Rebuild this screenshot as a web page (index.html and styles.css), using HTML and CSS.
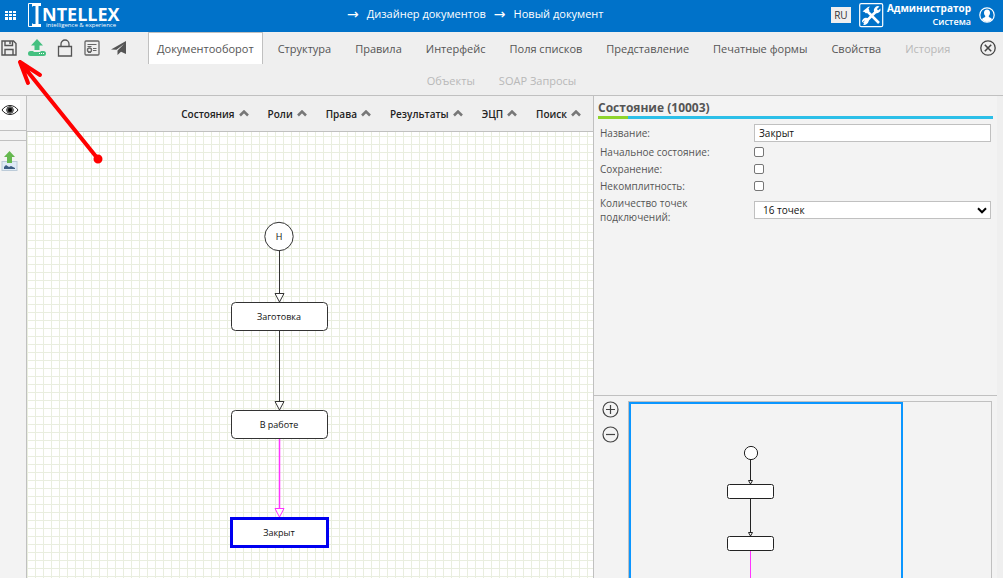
FILE: index.html
```html
<!DOCTYPE html>
<html lang="ru">
<head>
<meta charset="utf-8">
<title>Дизайнер документов</title>
<link rel="stylesheet" href="styles.css">
</head>
<body>
<div class="app">
  <header class="header">
    <div class="brand">
      <button class="icon-btn" aria-label="Меню">
        <svg width="11" height="10" viewBox="0 0 11 10" fill="#fff"><path d="M0 0h3v2H0zM4 0h3v2H4zM8 0h3v2H8zM0 3h3v2H0zM4 3h3v2H4zM8 3h3v2H8zM0 6h3v3H0zM4 6h3v3H4zM8 6h3v3H8z"/></svg>
      </button>
      <div class="logo">
        <svg width="14" height="25" viewBox="0 0 14 25" fill="none" stroke="#fff"><path d="M6 .5H.5v23H6M4.500 .5v3M4.500 23.500v-3"/><path d="M4 1.500h9M4 22.500h9M9 1v22" stroke-width="3"/></svg>
        <div class="logo-words"><strong>NTELLEX</strong><small>intelligence &amp; experience</small></div>
      </div>
    </div>
    <nav class="crumbs" aria-label="Путь">
      <span>→</span><a href="#">Дизайнер документов</a><span>→</span><a href="#">Новый документ</a>
    </nav>
    <div class="account">
      <button class="lang">RU</button>
      <svg width="25" height="25" viewBox="0 0 25 25" fill="none" stroke="#fff"><rect x=".7" y=".7" width="23" height="23" rx="1.500" stroke-width="1.200"/><path d="M7 7l13 13M18.500 7L5 20.500" stroke-width="2.600"/><path d="M3.500 8.500L9 4l2-.5-1.500 2L10.500 8 7 10.500 5.500 9z" fill="#fff" stroke="none"/><path d="M20.500 3.500l-2.600 2.600 1 1.300 2.600-2a4 4 0 0 1-5.500 4.500 4 4 0 0 1 4.500-6.400zM4 21.500l2.600-2.600-1-1.300-2.600 2a4 4 0 0 1 5.500-4.500A4 4 0 0 1 4 21.500z" fill="#fff" stroke="none"/></svg>
      <div class="user"><strong>Администратор</strong><span>Система</span></div>
      <svg width="16" height="16" viewBox="0 0 16 16"><circle cx="8" cy="8" r="7.200" fill="none" stroke="#fff" stroke-width="1.200"/><path d="M8 2.500c2 0 3 1.300 3 3.200 0 1.500-.6 2.500-1.200 3.100v1.300c1.600.6 2.800 1 3.200 2.300A7 7 0 0 1 8 15a7 7 0 0 1-5-2.600c.4-1.300 1.600-1.700 3.200-2.300V8.800C5.600 8.200 5 7.200 5 5.700c0-1.900 1-3.200 3-3.200z" fill="#fff"/></svg>
    </div>
  </header>

  <div class="toolbar">
    <div class="toolbar-row">
      <div class="tools">
        <button class="icon-btn" aria-label="Сохранить"><svg width="16" height="16" viewBox="0 0 16 16" fill="none" stroke="#555" stroke-width="1.400"><path d="M1 1h11.500L15 3.500V15H1zM4 1v4.500h7.500V1M9 1.500v2.500M4 15V9.500h8V15"/></svg></button>
        <button class="icon-btn" aria-label="Опубликовать"><svg width="18" height="18" viewBox="0 0 18 18"><path d="M9 0l6 6.500h-3.500V11h-5V6.500H3z" fill="#45c080"/><path d="M2.500 12h3v1h7v-1h3a2.500 2.500 0 0 1 0 5h-13a2.500 2.500 0 0 1 0-5z" fill="#45c080"/><path d="M11 14.500h1M13 14.500h1M15 14.500h1" stroke="#fff"/></svg></button>
        <button class="icon-btn" aria-label="Заблокировать"><svg width="16" height="18" viewBox="0 0 16 18" fill="none" stroke="#555" stroke-width="1.300"><path d="M1.500 7.500h13v9.500h-13zM4 7.500V5a4 4 0 0 1 8 0v2.500"/></svg></button>
        <button class="icon-btn" aria-label="Сертификат"><svg width="16" height="16" viewBox="0 0 16 16" fill="none" stroke="#666"><rect x="1" y="1" width="14" height="14" rx="1" stroke-width="1.300"/><path d="M3.500 4.500h9M3.500 6.500h4M9 8.500h3.500M9 10.500h3.500"/><circle cx="5.500" cy="10" r="2" stroke-width="1.400"/><path d="M4 12.500h3"/></svg></button>
        <button class="icon-btn" aria-label="Отправить"><svg width="16" height="16" viewBox="0 0 16 16" fill="#555"><path d="M15 1v13l-5-2.200L6.500 15v-4.500L13 4 5.500 9.800 0 9.500z"/></svg></button>
      </div>
      <nav class="tabs">
        <a class="tab active" href="#">Документооборот</a><a class="tab" href="#">Структура</a><a class="tab" href="#">Правила</a><a class="tab" href="#">Интерфейс</a><a class="tab" href="#">Поля списков</a><a class="tab" href="#">Представление</a><a class="tab" href="#">Печатные формы</a><a class="tab" href="#">Свойства</a><a class="tab off" href="#">История</a>
      </nav>
      <button class="icon-btn close" aria-label="Закрыть"><svg width="16" height="16" viewBox="0 0 16 16" fill="none" stroke="#444" stroke-width="1.300"><circle cx="8" cy="8" r="7.200"/><path d="M4.800 4.800l6.400 6.400M11.200 4.800l-6.400 6.400" stroke-width="1.600"/></svg></button>
    </div>
    <nav class="tabs second"><a class="tab off" href="#">Объекты</a><a class="tab off" href="#">SOAP Запросы</a></nav>
  </div>

  <main class="body">
    <aside class="rail">
      <button class="icon-btn eye" aria-label="Просмотр"><svg width="18" height="12" viewBox="0 0 18 12" fill="none" stroke="#222"><path d="M1 6c4-6 12-6 16 0-4 6-12 6-16 0z"/><circle cx="9" cy="6" r="3.300"/><circle cx="9" cy="6" r="2.200" fill="#000"/></svg></button>
      <div class="rail-gap"></div>
      <button class="icon-btn export" aria-label="Экспорт изображения"><svg width="17" height="20" viewBox="0 0 17 20"><rect x="1" y="10.500" width="15" height="9" fill="#dfeaf6" stroke="#bccbd8"/><path d="M3 18v-2l2-2 3 2 2-1 4 2v1z" fill="#3d5d82"/><path d="M8.500 0L14 6h-3v6H6V6H3z" fill="#65b84f"/></svg></button>
    </aside>

    <section class="designer">
      <div class="menu">
        <button>Состояния<svg class="chev" viewBox="0 0 10 7"><path d="M1 5.500l4-4 4 4"/></svg></button>
        <button>Роли<svg class="chev" viewBox="0 0 10 7"><path d="M1 5.500l4-4 4 4"/></svg></button>
        <button>Права<svg class="chev" viewBox="0 0 10 7"><path d="M1 5.500l4-4 4 4"/></svg></button>
        <button>Результаты<svg class="chev" viewBox="0 0 10 7"><path d="M1 5.500l4-4 4 4"/></svg></button>
        <button>ЭЦП<svg class="chev" viewBox="0 0 10 7"><path d="M1 5.500l4-4 4 4"/></svg></button>
        <button>Поиск<svg class="chev" viewBox="0 0 10 7"><path d="M1 5.500l4-4 4 4"/></svg></button>
      </div>
      <div class="canvas">
        <svg class="diagram" width="566" height="446" viewBox="0 0 566 446">
          <g fill="#fff" stroke="#333">
            <path d="M252.500 118v44M252.500 199v71"/>
            <path d="M252.500 307v69" stroke="#ff33ff" stroke-width="1.500"/>
            <path d="M248 161.500h9l-4.500 8.500zM248 269.500h9l-4.500 8.500z"/>
            <path d="M248 376.500h9l-4.500 8.500z" stroke="#ff33ff"/>
            <circle cx="252" cy="104.500" r="14.200"/>
            <rect x="204.500" y="170.500" width="96" height="28" rx="4"/>
            <rect x="204.500" y="278.500" width="96" height="28" rx="4"/>
            <rect x="204.500" y="386.500" width="96" height="28" stroke="#0000f0" stroke-width="3"/>
          </g>
          <g class="node-text"><text x="252" y="108">Н</text><text x="252" y="188">Заготовка</text><text x="252" y="296">В работе</text><text x="252" y="404">Закрыт</text></g>
        </svg>
      </div>
    </section>

    <aside class="side">
      <form class="props">
        <h2>Состояние (10003)</h2>
        <div class="rule"></div>
        <div class="fields">
          <label for="name">Название:</label><input id="name" class="box" type="text" value="Закрыт">
          <label for="start">Начальное состояние:</label><input id="start" type="checkbox">
          <label for="keep">Сохранение:</label><input id="keep" type="checkbox">
          <label for="part">Некомплитность:</label><input id="part" type="checkbox">
          <label for="points">Количество точек подключений:</label>
          <div class="select"><select id="points" class="box"><option>16 точек</option></select><svg width="10" height="7" viewBox="0 0 10 7"><path d="M1 1.300l4 4 4-4" fill="none" stroke="#000" stroke-width="2"/></svg></div>
        </div>
      </form>
      <div class="overview">
        <div class="zoom">
          <button class="icon-btn" aria-label="Увеличить"><svg width="17" height="17" viewBox="0 0 17 17" fill="none" stroke="#444" stroke-width="1.200"><circle cx="8.500" cy="8.500" r="7.500"/><path d="M4 8.500h9M8.500 4v9"/></svg></button>
          <button class="icon-btn" aria-label="Уменьшить"><svg width="17" height="17" viewBox="0 0 17 17" fill="none" stroke="#444" stroke-width="1.200"><circle cx="8.500" cy="8.500" r="7.500"/><path d="M4 8.500h9"/></svg></button>
        </div>
        <div class="map"><div class="view">
          <svg class="mini" width="270" height="174" viewBox="0 0 270 174" fill="#fff" stroke="#222">
            <path d="M119.500 55v25M119.500 94v38"/><path d="M117.500 76.500h4l-2 3.500zM117.500 128.500h4l-2 3.500z"/>
            <circle cx="120" cy="49" r="6.600"/><rect x="96.500" y="80.500" width="46" height="14" rx="2"/><rect x="96.500" y="132.500" width="46" height="14" rx="2"/>
            <path d="M119.500 147v27" stroke="#ff33ff"/>
          </svg>
        </div></div>
      </div>
    </aside>
  </main>
  <svg class="pointer" width="90" height="108" viewBox="0 0 90 108" fill="none" stroke="#f00" stroke-width="4" stroke-linecap="round"><path d="M82 102L4 5M4 5l20 13M4 5l8 21"/><circle cx="82" cy="102" r="2.500" fill="#f00"/></svg>
</div>
</body>
</html>
```
FILE: styles.css
```css
* { box-sizing: border-box; }
body { margin: 0; font: 11px/16px "Open Sans", "Noto Sans", sans-serif; color: #555; background: #efefef; }
a { color: inherit; text-decoration: none; }
svg { display: block; flex: none; }
button { font: inherit; color: inherit; border: 0; padding: 0; background: none; }
.app { position: relative; display: flex; flex-direction: column; height: 100vh; overflow: hidden; }

.header { display: flex; justify-content: space-between; align-items: center; height: 32px; padding: 0 8px 0 5px; background: #0072c9; color: #fff; flex: none; }
.brand { display: flex; align-items: center; gap: 12px; }
.icon-btn { flex: none; }
.logo { display: flex; }
.logo-words { display: flex; flex-direction: column; padding-top: 3px; }
.logo-words strong { font: bold 18px/16px "Open Sans", sans-serif; }
.logo-words small { font-size: 6px; line-height: 7px; padding-left: 4px; }
.crumbs { display: flex; align-items: center; gap: 8px; font-weight: 500; padding-bottom: 4px; }
.crumbs span { font-family: "DejaVu Sans", sans-serif; font-size: 14px; }
.account { display: flex; align-items: center; gap: 8px; padding-bottom: 2px; }
.lang { width: 20px; height: 16px; background: #efefef; color: #333; font-size: 10px; line-height: 14px; }
.user { display: flex; flex-direction: column; text-align: right; font-size: 10px; line-height: 13px; margin-left: -5px; }
.user span { font-size: 9px; font-weight: 600; }

.toolbar { flex: none; height: 64px; border-bottom: 1px solid #c0c0c0; }
.toolbar-row { display: flex; align-items: center; height: 32px; padding: 0 7px 0 1px; }
.tools { display: flex; align-items: center; gap: 11px; margin-right: 21px; }
.close { margin-left: auto; }
.tabs { display: flex; gap: 6px; align-items: flex-start; white-space: nowrap; }
.tab { padding: 0 8px; line-height: 31px; border: 1px solid transparent; border-bottom: 0; }
.tab.active { background: #fff; border-color: #c0c0c0; }
.tab.off { color: #b8b8b8; }
.second { justify-content: center; }

.body { flex: 1; min-height: 0; display: grid; grid-template-columns: 27px minmax(0, 1fr) 410px; }
.rail { border-right: 1px solid #c0c0c0; background: #f3f3f3; }
.eye { display: flex; align-items: center; justify-content: center; width: 20px; height: 20px; margin: 4px 0 10px; background: #fff; }
.rail-gap { height: 11px; border: solid #c0c0c0; border-width: 1px 0; }
.export { display: block; margin: 10px 0 0 1px; }

.designer { display: flex; flex-direction: column; min-width: 0; }
.menu { display: flex; flex: none; justify-content: flex-end; gap: 19px; height: 36px; padding-right: 12px; border-bottom: 1px solid #c0c0c0; background: #efefef; }
.menu button { display: flex; align-items: center; gap: 4px; font-size: 10px; font-weight: 600; color: #222; }
.chev { width: 10px; height: 7px; fill: none; stroke: #777; stroke-width: 2.500; }
.canvas { flex: 1; min-height: 0; overflow: hidden; background-color: #fff; background-image: linear-gradient(#e9eedf 1px, transparent 1px), linear-gradient(90deg, #e9eedf 1px, transparent 1px); background-size: 8px 8px; background-position: 0 4px; }
.node-text { font-size: 9px; fill: #111; text-anchor: middle; }

.side { display: flex; flex-direction: column; min-height: 0; border-left: 1px solid #c0c0c0; background: linear-gradient(#f3f3f3, #f3f3f3) 0 0 / calc(100% - 6px) 100% no-repeat #efefef; }
.props { flex: 1; padding: 4px 10px 0 4px; }
h2 { margin: 0; font-size: 12px; line-height: 16px; }
.rule { height: 3px; background: linear-gradient(90deg, #8fd32c 30px, #2cbfe8 30px); }
.fields { display: grid; grid-template-columns: 154px 1fr; row-gap: 3px; align-items: center; padding: 5px 2px 0; font-size: 10px; line-height: 14px; }
.fields label { max-width: 120px; }
.fields input[type=checkbox] { appearance: none; width: 10px; height: 10px; margin: 0; border: 1px solid #767676; border-radius: 2px; background: #fff; }
.box { width: 100%; height: 18px; border: 1px solid #c0c0c0; border-radius: 0; background: #fff; padding: 0 4px; font: 10px/14px "Open Sans", sans-serif; color: #111; }
.select { position: relative; }
.select select { appearance: none; padding-left: 8px; display: block; }
.select svg { position: absolute; right: 4px; top: 6px; }

.overview { display: flex; height: 183px; flex: none; gap: 9px; margin-right: 6px; padding: 5px 5px 0 8px; border-top: 1px solid #c0c0c0; }
.zoom { display: flex; flex-direction: column; gap: 8px; }
.map { flex: 1; border: 1px solid #c0c0c0; border-bottom: 0; }
.view { width: 274px; height: 100%; border: 2px solid #0a96ff; border-bottom: 0; overflow: hidden; }
.pointer { position: absolute; left: 16px; top: 57px; pointer-events: none; }
```
